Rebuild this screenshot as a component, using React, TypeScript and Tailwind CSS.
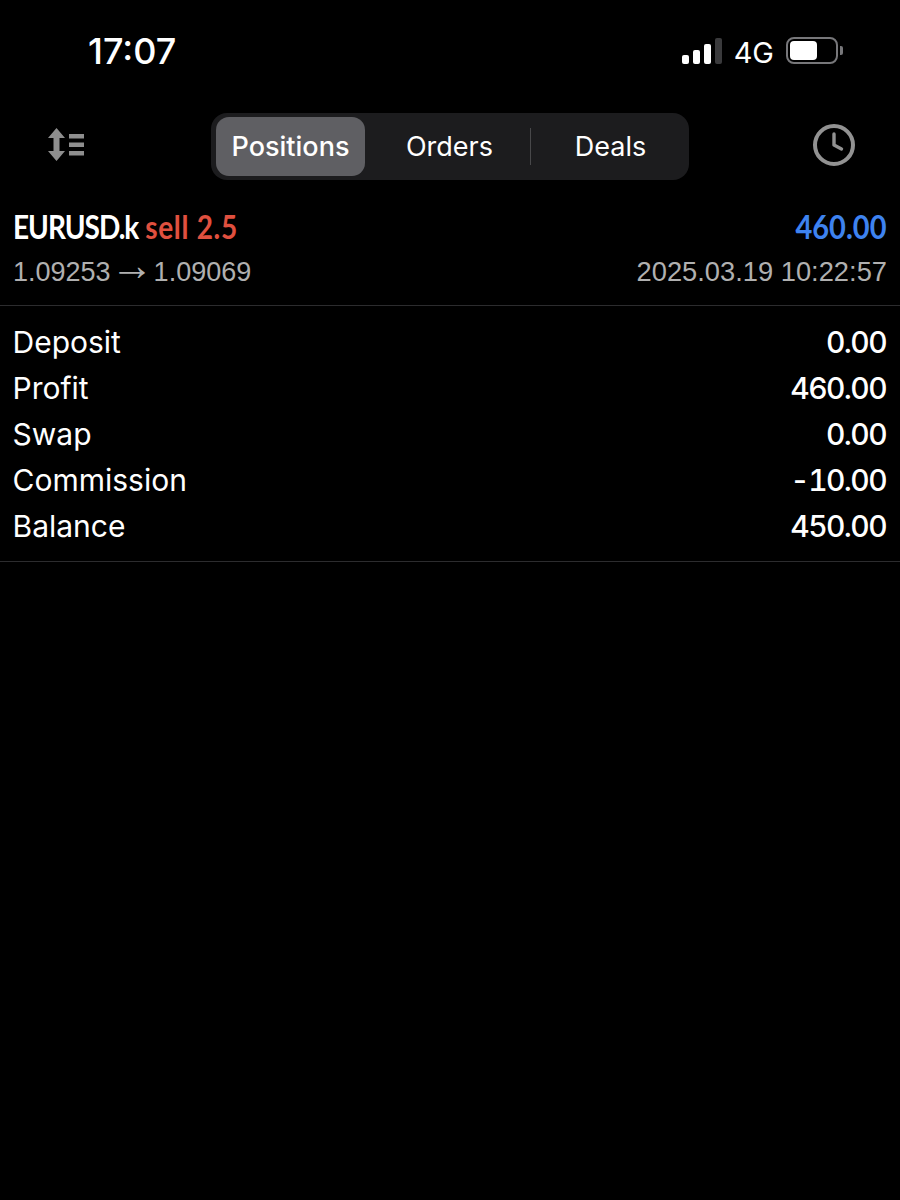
const summary = [
  { label: "Deposit", value: "0.00" },
  { label: "Profit", value: "460.00" },
  { label: "Swap", value: "0.00" },
  { label: "Commission", value: "-10.00" },
  { label: "Balance", value: "450.00" },
]

function SortIcon() {
  return (
    <svg width="38" height="34" viewBox="0 0 38 34" fill="#8e8e8e">
      <path d="M9.5 0 L18 10 L12.5 10 L12.5 23 L18 23 L9.5 33 L1 23 L6.5 23 L6.5 10 L1 10 Z" />
      <rect x="22" y="6" width="15" height="4.5" />
      <rect x="22" y="14.5" width="15" height="4.5" />
      <rect x="22" y="23" width="15" height="4.5" />
    </svg>
  )
}

function ClockIcon() {
  return (
    <svg width="44" height="44" viewBox="0 0 44 44" fill="none" stroke="#929292">
      <circle cx="22" cy="22" r="19" strokeWidth="4" />
      <path d="M22 11 L22 22 L29.5 26" strokeWidth="3.4" strokeLinecap="round" strokeLinejoin="round" />
    </svg>
  )
}

function StatusIcons() {
  return (
    <div className="flex items-center">
      <div className="flex items-end gap-[4px]">
        <div className="w-[7px] h-[9px] rounded-[2px] bg-white" />
        <div className="w-[7px] h-[14px] rounded-[2px] bg-white" />
        <div className="w-[7px] h-[20px] rounded-[2px] bg-white" />
        <div className="w-[7px] h-[26px] rounded-[2px] bg-[#3a3a3c]" />
      </div>
      <span className="ml-[12px] mt-[4px] text-[29px] leading-none text-white">4G</span>
      <div className="ml-[12px] flex items-center">
        <div className="w-[52px] h-[27px] rounded-[8px] border-2 border-[#77777a] p-[2px]">
          <div className="w-[27px] h-full rounded-[4px] bg-white" />
        </div>
        <div className="ml-[2px] w-[3px] h-[9px] rounded-r-[2px] bg-[#77777a]" />
      </div>
    </div>
  )
}

export default function App() {
  return (
    <div className="w-[900px] h-[1200px] bg-black text-white overflow-hidden font-['Inter','Noto_Sans',sans-serif]">
      {/* Status bar */}
      <div className="h-[113px] pl-[88px] pr-[57px] pt-[31px] flex items-start justify-between">
        <span className="text-[36px] leading-[40px] font-medium">17:07</span>
        <div className="pt-[3px]">
          <StatusIcons />
        </div>
      </div>

      {/* Toolbar */}
      <div className="h-[67px] pl-[47px] pr-[44px] flex items-start justify-between">
        <div className="mt-[15px]">
          <SortIcon />
        </div>
        <div className="w-[478px] h-[67px] ml-[3px] py-[4px] pl-[5px] pr-[4px] rounded-[16px] bg-[#1c1c1e] flex items-stretch text-[27px] leading-none">
          <div className="w-[149px] rounded-[13px] bg-[#5f5f63] flex items-center justify-center font-medium">Positions</div>
          <div className="w-[165px] pl-[4px] flex items-center justify-center">Orders</div>
          <div className="w-px my-[11px] bg-[#48484a]" />
          <div className="flex-1 pl-[5px] flex items-center justify-center">Deals</div>
        </div>
        <div className="mt-[10px]">
          <ClockIcon />
        </div>
      </div>

      {/* Closed deal */}
      <div className="pt-[28px] h-[126px] px-[13px] border-b border-[#2c2c2e]">
        <div className="flex justify-between items-center h-[38px] font-['Lato','Liberation_Sans',sans-serif] font-bold text-[33px]">
          <div className="origin-left scale-x-[0.85] whitespace-nowrap">
            <span className="tracking-[-1.2px]">EURUSD.k</span>{" "}
            <span className="tracking-[0.8px] text-[#e0503f]">sell 2.5</span>
          </div>
          <span className="origin-right scale-x-[0.88] text-[#3e83f0]">460.00</span>
        </div>
        <div className="mt-[9px] flex justify-between items-center h-[34px] text-[27.3px] text-[#b0b0b0] font-['Liberation_Sans',sans-serif]">
          <span className="flex items-center text-[27px]">
            1.09253
            <span className="w-[43px] pb-[14px] text-center text-[43px] leading-none">→</span>
            1.09069
          </span>
          <span>2025.03.19 10:22:57</span>
        </div>
      </div>

      {/* Summary */}
      <div className="pt-[13px] pb-[12px] px-[13px] border-b border-[#2c2c2e] text-[30px]">
        {summary.map((row) => (
          <div key={row.label} className="h-[46px] flex items-center justify-between">
            <span className="-ml-[0.5px]">{row.label}</span>
            <span className="mr-[1px] font-medium tabular-nums tracking-[-1.6px]">{row.value}</span>
          </div>
        ))}
      </div>
    </div>
  )
}
